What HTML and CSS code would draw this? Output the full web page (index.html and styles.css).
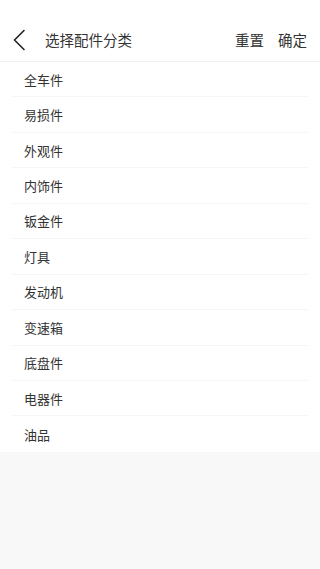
FILE: index.html
```html
<!DOCTYPE html>
<html lang="zh">
<head>
<meta charset="utf-8">
<meta name="viewport" content="width=device-width, initial-scale=1">
<link rel="stylesheet" href="styles.css">
</head>
<body>
<div class="page">
  <header class="header">
    <div class="header-left">
      <svg class="back" width="14" height="22" viewBox="0 0 14 22"><path d="M12 1.5 L2.5 11 L12 20.5" fill="none" stroke="#222" stroke-width="1.6" stroke-linecap="round" stroke-linejoin="round"/></svg>
      <span class="title">选择配件分类</span>
    </div>
    <div class="actions">
      <span class="action">重置</span>
      <span class="action">确定</span>
    </div>
  </header>
  <ul class="list">
    <li class="item">全车件</li>
    <li class="item">易损件</li>
    <li class="item">外观件</li>
    <li class="item">内饰件</li>
    <li class="item">钣金件</li>
    <li class="item">灯具</li>
    <li class="item">发动机</li>
    <li class="item">变速箱</li>
    <li class="item">底盘件</li>
    <li class="item">电器件</li>
    <li class="item">油品</li>
  </ul>
</div>
</body>
</html>
```
FILE: styles.css
```css
* { box-sizing: border-box; }
html, body { margin: 0; padding: 0; }
body {
  background: #f8f8f8;
  font-family: "Noto Sans CJK SC", "Noto Sans", sans-serif;
  color: #333;
}
.page { width: 320px; }
.header {
  height: 62px;
  background: #fff;
  border-bottom: 1px solid #f0f0f0;
  display: flex;
  align-items: center;
  justify-content: space-between;
  padding: 18px 13px 0 12px;
}
.header-left { display: flex; align-items: center; }
.back { display: block; margin-right: 19px; }
.title { font-size: 14.5px; color: #333; line-height: 20px; }
.actions { display: flex; gap: 14px; }
.action { font-size: 14.5px; color: #333; line-height: 20px; }
.list {
  list-style: none;
  margin: 0;
  padding: 0 12px;
  background: #fff;
}
.item {
  height: 35.45px;
  display: flex;
  align-items: center;
  padding-left: 12px;
  font-size: 13px;
  color: #333;
  border-bottom: 1px solid #f6f6f6;
}
.item:last-child { border-bottom: none; }
```
